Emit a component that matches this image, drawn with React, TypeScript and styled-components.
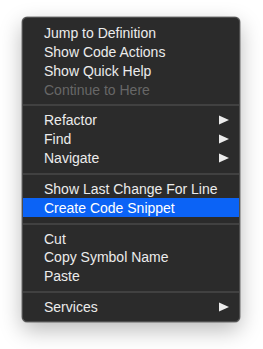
import React from "react";
import styled, { createGlobalStyle } from "styled-components";

type Entry =
  | { kind: "item"; label: string; disabled?: boolean; submenu?: boolean; active?: boolean }
  | { kind: "sep" };

const entries: Entry[] = [
  { kind: "item", label: "Jump to Definition" },
  { kind: "item", label: "Show Code Actions" },
  { kind: "item", label: "Show Quick Help" },
  { kind: "item", label: "Continue to Here", disabled: true },
  { kind: "sep" },
  { kind: "item", label: "Refactor", submenu: true },
  { kind: "item", label: "Find", submenu: true },
  { kind: "item", label: "Navigate", submenu: true },
  { kind: "sep" },
  { kind: "item", label: "Show Last Change For Line" },
  { kind: "item", label: "Create Code Snippet", active: true },
  { kind: "sep" },
  { kind: "item", label: "Cut" },
  { kind: "item", label: "Copy Symbol Name" },
  { kind: "item", label: "Paste" },
  { kind: "sep" },
  { kind: "item", label: "Services", submenu: true },
];

const GlobalStyle = createGlobalStyle`
  html, body {
    margin: 0;
    padding: 0;
    background: #ffffff;
  }
  body {
    font-family: "Liberation Sans", Arial, sans-serif;
    -webkit-font-smoothing: antialiased;
  }
`;

const Page = styled.div`
  width: 263px;
  height: 349px;
  padding: 17px 0 0 22px;
  box-sizing: border-box;
`;

const Menu = styled.div`
  width: 218px;
  height: 305px;
  box-sizing: border-box;
  padding: 5px 0;
  background: #2b2b2b;
  border-radius: 5px;
  border: 1px solid #4e4e4e;
  box-shadow: 0 0 0 0.5px rgba(0, 0, 0, 0.5), 0 8px 22px rgba(0, 0, 0, 0.28);
  display: flex;
  flex-direction: column;
  overflow: hidden;
`;

const Row = styled.div<{ $active?: boolean; $disabled?: boolean }>`
  height: 19px;
  display: flex;
  align-items: center;
  justify-content: space-between;
  padding: 1px 10px 0 21px;
  box-sizing: border-box;
  font-size: 14px;
  color: ${(p) => (p.$disabled ? "#676767" : "#ececec")};
  background: ${(p) => (p.$active ? "#0b63f6" : "transparent")};
  ${(p) => p.$active && "color: #ffffff;"}
`;

const Separator = styled.div`
  height: 12px;
  box-sizing: border-box;
  padding-top: 6px;
  &::after {
    content: "";
    display: block;
    height: 2px;
    background: #414141;
  }
`;

const Arrow = styled.svg`
  width: 10px;
  height: 10px;
  flex: none;
  margin-top: -1px;
`;

function SubmenuArrow() {
  return (
    <Arrow viewBox="0 0 10 10">
      <path d="M0 0.5 L10 5 L0 9.5 Z" fill="#ececec" />
    </Arrow>
  );
}

export default function App() {
  return (
    <>
      <GlobalStyle />
      <Page>
        <Menu>
          {entries.map((e, i) =>
            e.kind === "sep" ? (
              <Separator key={i} />
            ) : (
              <Row key={i} $active={e.active} $disabled={e.disabled}>
                <span>{e.label}</span>
                {e.submenu && <SubmenuArrow />}
              </Row>
            )
          )}
        </Menu>
      </Page>
    </>
  );
}
